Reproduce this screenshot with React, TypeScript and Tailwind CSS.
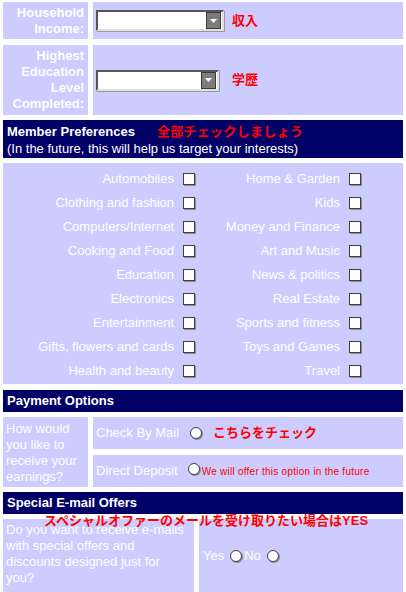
import React from 'react';

const leftPrefs = [
  'Automobiles',
  'Clothing and fashion',
  'Computers/Internet',
  'Cooking and Food',
  'Education',
  'Electronics',
  'Entertainment',
  'Gifts, flowers and cards',
  'Health and beauty',
];

const rightPrefs = [
  'Home & Garden',
  'Kids',
  'Money and Finance',
  'Art and Music',
  'News & politics',
  'Real Estate',
  'Sports and fitness',
  'Toys and Games',
  'Travel',
];

// old-school form widgets
function Checkbox() {
  return <span className="inline-block w-[12px] h-[12px] bg-white border border-[#404040] shadow-[1px_1px_0_#8a8a8a]" />;
}

function Radio() {
  return <span className="inline-block w-[12px] h-[12px] rounded-full bg-white border border-[#404040] shadow-[1px_1px_0_#8a8a8a]" />;
}

function Select({ className }: { className: string }) {
  return (
    <div className={`relative h-[21px] bg-white border-2 border-t-[#555] border-l-[#555] border-r-[#e0e0e0] border-b-[#e0e0e0] shadow-[1px_1px_0_#9a9a9a] ${className}`}>
      <div className="absolute right-[1px] top-[0px] h-[17px] w-[15px] bg-[#7c7c7c] border border-[#3a3a3a] flex items-center justify-center">
        <svg width="7" height="4" viewBox="0 0 7 4">
          <path d="M0 0h7L3.5 4z" fill="#ffffff" />
        </svg>
      </div>
    </div>
  );
}

export default function App() {
  return (
    <div className="w-[406px] min-h-[592px] bg-white text-white text-[13px] leading-4 font-['Liberation_Sans','Noto_Sans_CJK_JP',sans-serif] overflow-hidden">
      <div className="px-[3px] pt-[2px]">
        {/* Household income */}
        <div className="flex gap-[5px] h-[37px]">
          <div className="w-[85px] bg-[#ccccff] flex flex-col justify-center items-end pr-[4px] font-bold text-right">
            <span>Household</span>
            <span>Income:</span>
          </div>
          <div className="flex-1 bg-[#ccccff] flex items-center pl-[3px]">
            <Select className="w-[128px]" />
            <span className="ml-[8px] text-[#ff0000] font-bold">収入</span>
          </div>
        </div>

        {/* Education */}
        <div className="flex gap-[5px] h-[70px] mt-[6px]">
          <div className="w-[85px] bg-[#ccccff] flex flex-col justify-center items-end pr-[4px] font-bold text-right">
            <span>Highest</span>
            <span>Education</span>
            <span>Level</span>
            <span>Completed:</span>
          </div>
          <div className="flex-1 bg-[#ccccff] flex items-center pl-[3px]">
            <Select className="w-[123px]" />
            <span className="ml-[13px] text-[#ff0000] font-bold">学歴</span>
          </div>
        </div>

        {/* Member preferences header */}
        <div className="mt-[5px] h-[38px] bg-[#000066] pl-[4px] pt-[3px]">
          <div className="flex h-[17px] items-center">
            <span className="font-bold">Member Preferences</span>
            <span className="ml-[22px] text-[#ff0000] font-bold tracking-[0.3px]">全部チェックしましょう</span>
          </div>
          <div className="h-[17px] flex items-center">(In the future, this will help us target your interests)</div>
        </div>

        {/* Preferences grid */}
        <div className="mt-[5px] h-[221px] bg-[#ccccff] pt-[4px]">
          {leftPrefs.map((l, i) => (
            <div key={l} className="flex items-center h-[24px]">
              <span className="w-[171px] text-right">{l}</span>
              <span className="ml-[9px] flex">
                <Checkbox />
              </span>
              <span className="w-[145px] text-right">{rightPrefs[i]}</span>
              <span className="ml-[9px] flex">
                <Checkbox />
              </span>
            </div>
          ))}
        </div>

        {/* Payment options */}
        <div className="mt-[6px] h-[22px] bg-[#000066] pl-[4px] flex items-center font-bold">Payment Options</div>
        <div className="mt-[5px] flex gap-[5px] h-[70px]">
          <div className="w-[85px] bg-[#ccccff] pl-[3px] pt-[4px]">
            <div>How would</div>
            <div>you like to</div>
            <div>receive your</div>
            <div>earnings?</div>
          </div>
          <div className="flex-1 flex flex-col gap-[6px]">
            <div className="h-[32px] bg-[#ccccff] pl-[3px] flex items-center">
              <span>Check By Mail</span>
              <span className="ml-[11px] flex">
                <Radio />
              </span>
              <span className="ml-[11px] text-[#ff0000] font-bold">こちらをチェック</span>
            </div>
            <div className="h-[32px] bg-[#ccccff] pl-[3px] flex items-center">
              <span>Direct Deposit</span>
              <span className="ml-[10px] flex -mt-[4px]">
                <Radio />
              </span>
              <span className="ml-[2px] mt-[2px] text-[#ff0000] text-[10px] tracking-[0.25px]">We will offer this option in the future</span>
            </div>
          </div>
        </div>

        {/* Special offers */}
        <div className="mt-[5px] h-[22px] bg-[#000066] pl-[4px] flex items-center font-bold">Special E-mail Offers</div>
        <div className="relative mt-[5px] flex gap-[5px] h-[73px]">
          <div className="w-[191px] bg-[#ccccff] pl-[3px] pt-[3px]">
            <div>Do you want to receive e-mails</div>
            <div>with special offers and</div>
            <div>discounts designed just for</div>
            <div>you?</div>
          </div>
          <div className="flex-1 bg-[#ccccff] pl-[4px] flex items-center">
            <span>Yes</span>
            <span className="ml-[6px] flex">
              <Radio />
            </span>
            <span className="ml-[2px]">No</span>
            <span className="ml-[6px] flex">
              <Radio />
            </span>
          </div>
          <span className="absolute left-[41px] top-[-6px] text-[#ff0000] font-bold text-[13px] whitespace-nowrap">
            スペシャルオファーのメールを受け取りたい場合はYES
          </span>
        </div>
      </div>
    </div>
  );
}
